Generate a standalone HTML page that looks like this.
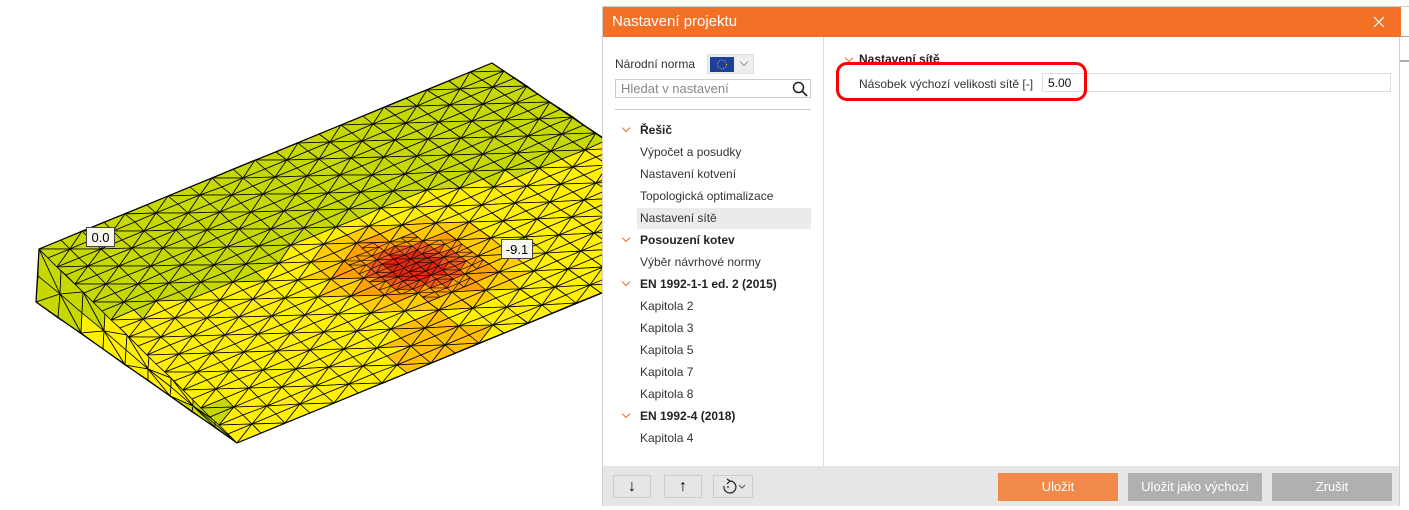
<!DOCTYPE html>
<html><head><meta charset="utf-8"><style>
body{margin:0;width:1409px;height:510px;overflow:hidden;background:#fff;font-family:"Liberation Sans",sans-serif;position:relative}
.a{position:absolute}
.dlg{left:602px;top:6px;width:798px;height:500px;background:#fff;border:1px solid #d0d0d0;box-sizing:border-box}
.title{left:0;top:0;width:798px;height:30px;background:#f37027;color:#fff;font-size:15px;line-height:30px;padding-left:9px;box-sizing:border-box}
.t{font-size:12px;color:#333;white-space:nowrap}
.b{font-weight:bold;color:#222}
.chev{width:5px;height:5px;border-right:1px solid #f37027;border-bottom:1px solid #f37027;transform:rotate(45deg)}
.btn{height:28px;line-height:28px;text-align:center;color:#fff;font-size:13px}
.sb{width:38px;height:23px;border:1px solid #ccc;box-sizing:border-box;text-align:center;font-size:16px;line-height:21px}
</style></head><body>
<svg id="m" class="a" style="left:0;top:0" width="602" height="510"></svg>
<div class="a" style="left:86px;top:227px;width:29px;height:20px;background:#f8f8f0;border:1px solid #444;font-size:13px;line-height:19px;text-align:center;box-sizing:border-box">0.0</div>
<div class="a" style="left:501px;top:239px;width:32px;height:20px;background:#f8f8f0;border:1px solid #444;font-size:13px;line-height:19px;text-align:center;box-sizing:border-box">-9.1</div>
<div class="a" style="left:930px;top:0;width:479px;height:6px;border-bottom:1px solid #ccc"></div>
<div class="a" style="left:1400px;top:36px;width:9px;height:1px;background:#aaa"></div>
<div class="a" style="left:1400px;top:60px;width:9px;height:2px;background:#aaa"></div>

<div class="a dlg">
 <div class="a title">Nastavení projektu<svg class="a" style="left:770px;top:9px" width="12" height="12"><path d="M1 1L11 11M11 1L1 11" stroke="#fff" stroke-width="1.2"/></svg></div>
 <div class="a" style="left:220px;top:30px;width:1px;height:429px;background:#ddd"></div>
 <div class="a t" style="left:12px;top:50px">Národní norma</div>
 <div class="a" style="left:104px;top:47px;width:47px;height:20px;background:#eee;border:1px solid #ddd;box-sizing:border-box"><svg class="a" style="left:2px;top:2px" width="24" height="15"><rect width="24" height="15" fill="#1d3f99"/><circle cx="12" cy="7.5" r="4.5" fill="none" stroke="#e8c800" stroke-width="1" stroke-dasharray="1 1.5"/></svg><div class="a" style="left:33px;top:4px;width:5px;height:5px;border-right:1px solid #999;border-bottom:1px solid #999;transform:rotate(45deg)"></div></div>
 <div class="a" style="left:12px;top:72px;width:196px;height:19px;border:1px solid #ccc;box-sizing:border-box"><span class="a t" style="left:5px;top:1px;color:#888;font-size:13px">Hledat v nastavení</span><svg class="a" style="left:176px;top:1px" width="16" height="16"><circle cx="6.5" cy="6.5" r="5" fill="none" stroke="#222" stroke-width="1.5"/><line x1="10" y1="10" x2="15" y2="15" stroke="#222" stroke-width="1.6"/></svg></div>
 <div class="a" style="left:12px;top:102px;width:196px;height:1px;background:#ccc"></div>
 <div class="a" style="left:34px;top:201px;width:174px;height:21px;background:#ebebeb"></div>
 <div id="tree"></div>
 <div class="a" style="left:243px;top:48px;width:5px;height:5px;border-right:1px solid #f37027;border-bottom:1px solid #f37027;transform:rotate(45deg)"></div>
 <div class="a t b" style="left:256px;top:45px">Nastavení sítě</div>
 <div class="a t" style="left:256px;top:70px">Násobek výchozí velikosti sítě [-]</div>
 <div class="a" style="left:439px;top:66px;width:349px;height:19px;border:1px solid #ddd;box-sizing:border-box"><span class="a t" style="left:5px;top:2px;color:#111">5.00</span></div>
 <div class="a" style="left:233px;top:55px;width:251px;height:39px;border:3px solid #f00;border-radius:11px;box-sizing:border-box"></div>
 <div class="a" style="left:0;top:459px;width:796px;height:40px;background:#e6e6e6"></div>
 <div class="a sb" style="left:10px;top:468px">↓</div>
 <div class="a sb" style="left:61px;top:468px">↑</div>
 <div class="a sb" style="left:110px;top:468px;width:40px"><svg width="38" height="21"><path d="M16 5 A6 6 0 1 1 10 10" fill="none" stroke="#222" stroke-width="1.2"/><path d="M13 3 L16 5 L13 8" fill="none" stroke="#222" stroke-width="1.2"/><circle cx="14" cy="11" r="0.9" fill="#222"/><path d="M25 9 L28 12 L31 9" fill="none" stroke="#555" stroke-width="1"/></svg></div>
 <div class="a btn" style="left:395px;top:466px;width:120px;background:#f0894a">Uložit</div>
 <div class="a btn" style="left:525px;top:466px;width:134px;background:#b0b0b0">Uložit jako výchozí</div>
 <div class="a btn" style="left:669px;top:466px;width:120px;background:#b0b0b0">Zrušit</div>
</div>
<script>
var items=[["Řešič",1],["Výpočet a posudky"],["Nastavení kotvení"],["Topologická optimalizace"],["Nastavení sítě"],["Posouzení kotev",1],["Výběr návrhové normy"],["EN 1992-1-1 ed. 2 (2015)",1],["Kapitola 2"],["Kapitola 3"],["Kapitola 5"],["Kapitola 7"],["Kapitola 8"],["EN 1992-4 (2018)",1],["Kapitola 4"]];
var h="";items.forEach(function(it,i){var y=116+i*22;if(it[1])h+='<div class="a chev" style="left:20px;top:'+(y+2)+'px"></div><div class="a t b" style="left:37px;top:'+y+'px">'+it[0]+'</div>';else h+='<div class="a t" style="left:37px;top:'+y+'px">'+it[0]+'</div>';});
document.getElementById("tree").innerHTML=h;
var s="";
var bd=[[0,330],[147,310],[250,280],[300,245],[400,200],[500,180],[580,150],[700,120]];
function bline(x){for(var i=0;i<bd.length-1;i++){if(x<=bd[i+1][0]){var t=(x-bd[i][0])/(bd[i+1][0]-bd[i][0]);return bd[i][1]+t*(bd[i+1][1]-bd[i][1]);}}return 120;}
function hd(x,y){return Math.hypot((x-415)/2.2,y-267);}
function col(x,y){var d=hd(x,y);
 if(d<14)return"#e02a10";if(d<22)return"#f05a18";if(d<34)return"#ffa000";if(d<46)return"#ffcc00";
 var d2=Math.hypot((x-440)/1.5,y-345);if(d2<30)return"#ffc000";
 if(x<230&&y>400)return"#c6d800";
 return y>bline(x)?"#fff000":"#c6d800";}
function tri(p,q,r,lv){var cx=(p[0]+q[0]+r[0])/3,cy=(p[1]+q[1]+r[1])/3;
 var d=hd(cx,cy);
 if(lv<1&&d<30&&cy<330){function m(a,b){return[(a[0]+b[0])/2,(a[1]+b[1])/2];}var a=m(p,q),b=m(q,r),c=m(r,p);tri(p,a,c,lv+1);tri(a,q,b,lv+1);tri(c,b,r,lv+1);tri(a,b,c,lv+1);return;}
 s+='<polygon points="'+p.map(Math.round)+' '+q.map(Math.round)+' '+r.map(Math.round)+'" fill="'+col(cx,cy)+'" stroke="#000" stroke-width="'+(lv?0.6:0.8)+'" stroke-linejoin="round"/>';}
function bq(P00,P10,P01,P11,nu,nv){
 function P(u,v){return [(1-u)*(1-v)*P00[0]+u*(1-v)*P10[0]+(1-u)*v*P01[0]+u*v*P11[0],(1-u)*(1-v)*P00[1]+u*(1-v)*P10[1]+(1-u)*v*P01[1]+u*v*P11[1]];}
 for(var i=0;i<nu;i++)for(var j=0;j<nv;j++){var p=P(i/nu,j/nv),q=P((i+1)/nu,j/nv),r=P(i/nu,(j+1)/nv),t=P((i+1)/nu,(j+1)/nv);if((i+j)%2){tri(p,q,r,0);tri(q,t,r,0);}else{tri(p,q,t,0);tri(p,t,r,0);}}}
var A=[39,249],B=[492,63],C=[746,233],D=[237,443];
bq([39,249],[237,443],[36,302],[237,443],9,2);
bq(A,B,D,C,21,22);
s+='<polyline points="39,249 492,63 760,245" fill="none" stroke="#000" stroke-width="1.2"/><polyline points="39,249 36,302 237,443 760,228" fill="none" stroke="#000" stroke-width="1.2"/>';
document.getElementById("m").innerHTML=s;
</script>
</body></html>
